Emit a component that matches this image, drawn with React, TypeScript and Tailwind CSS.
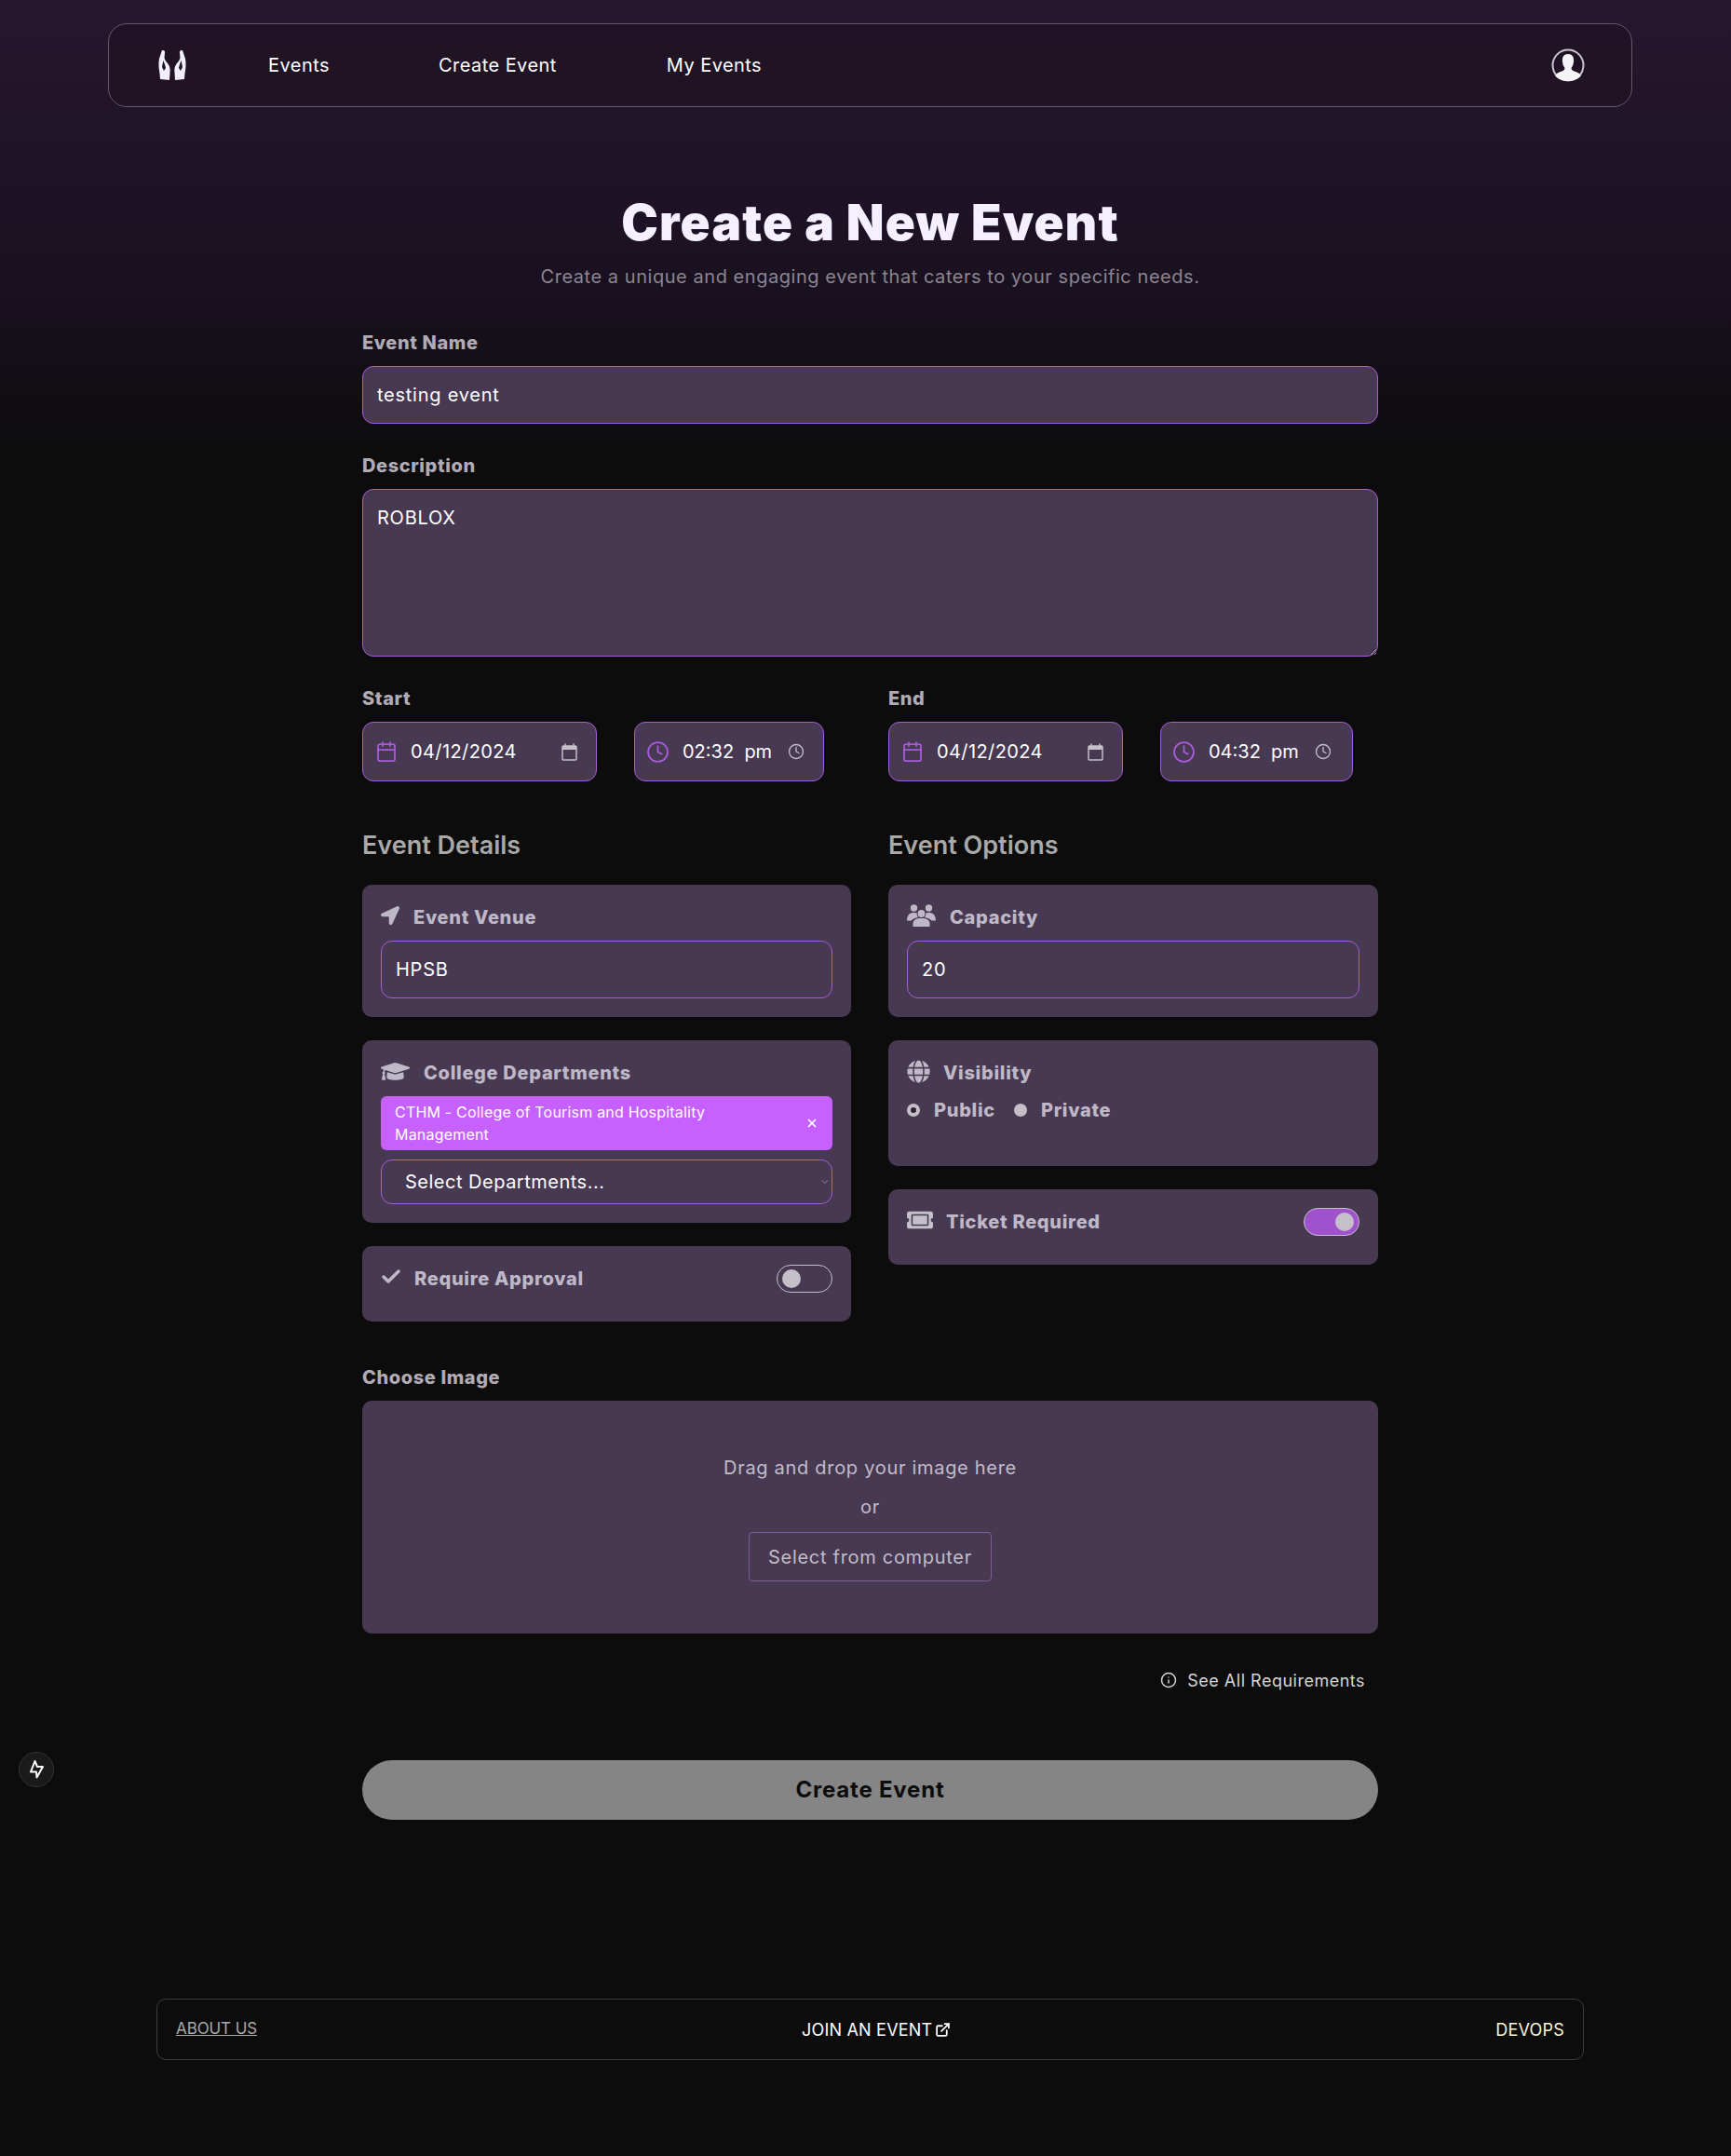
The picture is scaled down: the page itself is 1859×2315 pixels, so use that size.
import React from "react";
import { Calendar, Clock, Info, ChevronDown, X, Check, ExternalLink } from "lucide-react";
import { FaLocationArrow, FaGraduationCap, FaGlobe, FaTicketAlt } from "react-icons/fa";

function Logo() {
  return (
    <svg width="30" height="34" viewBox="0 0 30 34" fill="#f3effa">
      <path d="M4 1 C6 0.5 7.5 1.5 7 4 L6.5 9 C7 11 8 13 10 15 C12.5 18 13 21 12.5 25 L12 33 L2 32 L1.5 26 C0.5 21 0 15 1 10 Z" />
      <path d="M26 1 C24 0.5 22.5 1.5 23 4 L23.5 9 C23 11 22 13 20 15 C17.5 18 17 21 17.5 25 L18 33 L28 32 L28.5 26 C29.5 21 30 15 29 10 Z" />
      <path d="M5.3 12 L4 19 L6 23 L8 20 L7 16 Z" fill="#1f1222" />
      <path d="M24.7 12 L26 19 L24 23 L22 20 L23 16 Z" fill="#1f1222" />
    </svg>
  );
}

function Avatar() {
  return (
    <svg width="36" height="36" viewBox="0 0 36 36">
      <circle cx="18" cy="18" r="16.5" fill="#1f1222" stroke="#c9c6cc" strokeWidth="2" />
      <path d="M18 6 C22.5 6 24.5 9 24 14 C23.8 17 23 19 21.5 21 C21.5 23 23 24 26 25 C29 26 31 27.5 32 29 C29 33 24 35 18 35 C12 35 7 33 4 29 C5 27.5 7 26 10 25 C13 24 14.5 23 14.5 21 C13 19 12.2 17 12 14 C11.5 9 13.5 6 18 6 Z" fill="#f4f3f5" />
    </svg>
  );
}

function NativeCalendar() {
  return (
    <svg width="17" height="19" viewBox="0 0 17 19" fill="none" className="shrink-0">
      <path d="M4 0.5 V3 M13 0.5 V3" stroke="#c4bfc9" strokeWidth="1.5" />
      <rect x="1" y="3" width="15" height="15" rx="1" stroke="#c4bfc9" strokeWidth="1.5" />
      <rect x="1" y="3" width="15" height="4" fill="#c4bfc9" />
    </svg>
  );
}

function People() {
  return (
    <svg width="31" height="24" viewBox="0 0 31 24" fill="#bfb8c7" className="-mt-1 shrink-0">
      <circle cx="7.5" cy="4" r="3.7" />
      <circle cx="23.5" cy="4" r="3.7" />
      <circle cx="15.5" cy="10" r="3.9" />
      <path d="M6.5 24 V20.5 C6.5 17 9.5 15 15.5 15 C21.5 15 24.5 17 24.5 20.5 V24 Z" />
      <path d="M0 17.5 C0 11.5 3 9 7.5 9 C9 9 10 9.2 10.8 9.6 C10.5 11.5 11 13 12 14 C8 14.8 5.5 16 4.8 17.5 Z" />
      <path d="M31 17.5 C31 11.5 28 9 23.5 9 C22 9 21 9.2 20.2 9.6 C20.5 11.5 20 13 19 14 C23 14.8 25.5 16 26.2 17.5 Z" />
    </svg>
  );
}

const labelCls = "text-[20px] leading-6 font-extrabold tracking-[0.6px] text-[#b0abb4]";
const fieldCls = "w-full h-[62px] px-[15px] rounded-[12px] border border-[#a85cd8] bg-[#473952] text-[20px] tracking-[0.75px] text-white outline-none";
const cardCls = "rounded-[10px] bg-[#473952] p-[20px]";
const cardLabelCls = "text-[20px] font-extrabold tracking-[0.7px] text-[#bfb8c7]";

function DateTime({ label, time, timeW }: { label: string; time: string; timeW: string }) {
  return (
    <div>
      <div className={labelCls}>{label}</div>
      <div className="mt-[13px] flex gap-[40px]">
        <div className="flex h-[64px] w-[252px] items-center rounded-[12px] border border-[#a85cd8] bg-[#473952] pl-[13px] pr-[20px]">
          <Calendar size={24} strokeWidth={1.75} color="#a95bd8" className="shrink-0" />
          <span className="ml-[14px] flex-1 text-[20px] tracking-[0.4px] text-white">04/12/2024</span>
          <NativeCalendar />
        </div>
        <div className={`flex h-[64px] ${timeW} items-center rounded-[12px] border border-[#a85cd8] bg-[#473952] pl-[12px]`}>
          <Clock size={25} strokeWidth={1.75} color="#a95bd8" className="shrink-0" />
          <span className="ml-[14px] whitespace-pre text-[20px] text-white">{time}</span>
          <Clock size={18} strokeWidth={1.75} color="#c4bfc9" className="ml-[17px] shrink-0" />
        </div>
      </div>
    </div>
  );
}

function Toggle({ on }: { on?: boolean }) {
  return (
    <div className={`flex h-[30px] w-[60px] items-center rounded-full border border-[#c4bfc9] px-[5px] ${on ? "justify-end bg-[#a052cc]" : "justify-start"}`}>
      <div className="h-[20px] w-[20px] rounded-full bg-[#c4bfc9]" />
    </div>
  );
}

export default function App() {
  return (
    <div className="min-h-[2315px] bg-[linear-gradient(180deg,#26172e_0px,#1a1120_300px,#0c0c0c_500px)] pl-[10px] pt-[25px] font-[Inter,sans-serif]">
      <nav className="mx-auto flex h-[90px] w-[1637px] items-center rounded-[20px] border border-[#655a6c] bg-[#1f1222]/70 pl-[53px] pr-[50px] text-[20px] tracking-[0.45px] text-white">
        <Logo />
        <a className="ml-[88px]">Events</a>
        <a className="ml-[117px]">Create Event</a>
        <a className="ml-[118px]">My Events</a>
        <div className="ml-auto"><Avatar /></div>
      </nav>

      <main className="mx-auto w-[1091px]">
        <h1 className="mt-[94px] text-center text-[53px] font-black leading-[60px] tracking-[1.2px] text-[#f5f0ff]">Create a New Event</h1>
        <p className="mt-[14px] text-center text-[20px] leading-7 tracking-[0.55px] text-[#8a8590]">Create a unique and engaging event that caters to your specific needs.</p>

        <div className={`mt-[45px] ${labelCls}`}>Event Name</div>
        <input className={`mt-[13px] ${fieldCls}`} defaultValue="testing event" />

        <div className={`mt-[33px] ${labelCls}`}>Description</div>
        <textarea className="mt-[13px] block h-[180px] w-full rounded-[12px] border border-[#a85cd8] bg-[#473952] p-[15px] text-[20px] tracking-[0.75px] text-white outline-none [color-scheme:dark]" defaultValue="ROBLOX" />

        <div className="mt-[33px] grid grid-cols-[525px_526px] gap-x-[40px]">
          <div>
            <DateTime label="Start" time="02:32  pm" timeW="w-[204px]" />
            <h2 className="mt-[53px] text-[27px] font-semibold leading-8 text-[#a9a9a9]">Event Details</h2>
            <div className="mt-[26px] flex flex-col gap-[25px]">
              <div className={cardCls}>
                <div className="flex h-[30px] items-center gap-[15px]">
                  <FaLocationArrow size={20} color="#bfb8c7" className="-mt-1" />
                  <span className={cardLabelCls}>Event Venue</span>
                </div>
                <input className={`mt-[10px] ${fieldCls}`} defaultValue="HPSB" />
              </div>
              <div className={cardCls}>
                <div className="flex h-[30px] items-center gap-[15px]">
                  <FaGraduationCap size={31} color="#bfb8c7" className="-mt-1" />
                  <span className={cardLabelCls}>College Departments</span>
                </div>
                <div className="mt-[10px] flex h-[58px] items-center rounded-[6px] bg-[#c661ff] px-[15px] text-[16px] leading-6 tracking-[0.2px] text-white">
                  <span className="w-[380px]">CTHM - College of Tourism and Hospitality Management</span>
                  <X size={14} strokeWidth={3} className="ml-auto" />
                </div>
                <div className="mt-[10px] flex h-[48px] items-center rounded-[12px] border border-[#a85cd8] pl-[25px] pr-[1px] text-[20px] tracking-[0.5px] text-white">
                  Select Departments...
                  <ChevronDown size={12} color="#8c8494" className="ml-auto" />
                </div>
              </div>
              <div className={`${cardCls} !pb-[31px]`}>
                <div className="flex h-[30px] items-center">
                  <Check size={24} strokeWidth={3.5} color="#bfb8c7" className="-ml-[1px] -mt-1" />
                  <span className={`ml-[13px] ${cardLabelCls}`}>Require Approval</span>
                  <div className="ml-auto"><Toggle /></div>
                </div>
              </div>
            </div>
          </div>

          <div>
            <DateTime label="End" time="04:32  pm" timeW="w-[207px]" />
            <h2 className="mt-[53px] text-[27px] font-semibold leading-8 text-[#a9a9a9]">Event Options</h2>
            <div className="mt-[26px] flex flex-col gap-[25px]">
              <div className={cardCls}>
                <div className="flex h-[30px] items-center gap-[15px]">
                  <People />
                  <span className={`tracking-[0.3px] ${cardLabelCls}`}>Capacity</span>
                </div>
                <input className={`mt-[10px] ${fieldCls}`} defaultValue="20" />
              </div>
              <div className={`${cardCls} h-[135px]`}>
                <div className="flex h-[30px] items-center gap-[14px]">
                  <FaGlobe size={25} color="#bfb8c7" className="-mt-1" />
                  <span className={cardLabelCls}>Visibility</span>
                </div>
                <div className={`mt-[10px] flex h-[30px] items-center ${cardLabelCls}`}>
                  <span className="h-[14px] w-[14px] rounded-full border-[4px] border-[#c4bfc9] bg-[#2b2233]" />
                  <span className="ml-[15px]">Public</span>
                  <span className="ml-[20px] h-[14px] w-[14px] rounded-full bg-[#c4bfc9]" />
                  <span className="ml-[15px]">Private</span>
                </div>
              </div>
              <div className={`${cardCls} !pb-[31px]`}>
                <div className="flex h-[30px] items-center">
                  <FaTicketAlt size={28} color="#c4bfc9" className="-mt-1" />
                  <span className={`ml-[14px] ${cardLabelCls}`}>Ticket Required</span>
                  <div className="ml-auto"><Toggle on /></div>
                </div>
              </div>
            </div>
          </div>
        </div>

        <div className={`mt-[48px] ${labelCls}`}>Choose Image</div>
        <div className="mt-[13px] flex h-[250px] flex-col items-center rounded-[10px] bg-[#473952] pt-[58px] text-[20px] leading-7 tracking-[0.7px] text-[#c2bcc9]">
          <div>Drag and drop your image here</div>
          <div className="mt-[14px]">or</div>
          <div className="mt-[13px] flex h-[53px] w-[261px] items-center justify-center rounded-[4px] border border-[#7e5a98]">Select from computer</div>
        </div>

        <div className="mt-[38px] flex h-[24px] items-center justify-end pr-[14px] text-[18px] tracking-[0.5px] text-[#d5d5d5]">
          <Info size={18} color="#d5d5d5" />
          <span className="ml-[11px]">See All Requirements</span>
        </div>

        <button className="mt-[74px] block h-[64px] w-full rounded-full bg-[#858585] text-[24px] font-bold tracking-[0.8px] text-[#0c0c0c]">Create Event</button>
      </main>

      <footer className="mx-auto mt-[192px] flex h-[66px] w-[1533px] items-center justify-between rounded-[10px] border border-[#3c3c3c] px-[20px] text-[18px] tracking-[0.2px]">
        <a className="text-[17px] tracking-[-0.1px] text-[#a9a9a9] underline">ABOUT US</a>
        <a className="flex items-center gap-[3px] text-white">JOIN AN EVENT <ExternalLink size={17} strokeWidth={2.5} /></a>
        <a className="text-[#fdf3d8]">DEVOPS</a>
      </footer>

      <div className="absolute left-[20px] top-[1881px] flex h-[38px] w-[38px] items-center justify-center rounded-full border border-[#333] bg-[#1a1a1a]">
        <svg width="15" height="20" viewBox="0 0 15 20" fill="none" stroke="#fff" strokeWidth="2" strokeLinejoin="round">
          <path d="M5.5 1 L1 12.5 H7 L7.5 18.5 L14 7 H8 Z" />
        </svg>
      </div>
    </div>
  );
}
